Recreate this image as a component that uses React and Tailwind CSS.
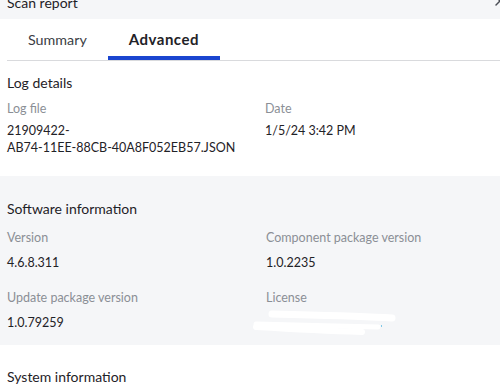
import { X } from 'lucide-react';

const font = { fontFamily: 'Lato, "Liberation Sans", sans-serif' };

function Field({ label, children }) {
  return (
    <div>
      <div className="text-[12.5px] leading-[18px] text-[#8b8f96]">{label}</div>
      <div className="mt-[7px] text-[12.5px] leading-[17px] text-[#1f2227]">{children}</div>
    </div>
  );
}

function Scribble() {
  return (
    <svg width="150" height="26" viewBox="0 0 150 26" className="-ml-[16px] mt-[3px] block">
      <path d="M22 4 C60 5, 110 6, 142 8" stroke="#ffffff" strokeWidth="7" strokeLinecap="round" fill="none" />
      <path d="M6 14 C40 15, 90 16, 128 17" stroke="#ffffff" strokeWidth="5" strokeLinecap="round" fill="none" />
      <path d="M6 17 C40 19, 80 21, 112 22" stroke="#ffffff" strokeWidth="6" strokeLinecap="round" fill="none" />
      <rect x="131" y="15" width="1" height="2" fill="#7fc8e8" />
    </svg>
  );
}

export default function App() {
  return (
    <div className="w-[500px] h-[387px] overflow-hidden bg-white" style={font}>
      {/* Header */}
      <div className="h-[19px] bg-[#f5f6f8] flex justify-between overflow-hidden px-[7px]">
        <div className="-mt-[7px] text-[14px] leading-[20px] text-[#1f2227]">Scan report</div>
        <X size={16} strokeWidth={2.2} className="-mt-[7px] -mr-[15px] text-[#4a4d55]" />
      </div>

      {/* Tabs */}
      <div className="ml-[7px] flex border-b border-[#d9dadd]">
        <button className="h-[41px] px-[21px] text-[14.3px] text-[#3a3d44]">Summary</button>
        <button className="relative h-[41px] px-[21px] text-[15px] font-bold tracking-[0.5px] text-[#1f2227]">
          Advanced
          <span className="absolute left-0 right-0 bottom-0 h-[4px] bg-[#1a45d0]" />
        </button>
      </div>

      {/* Log details */}
      <div className="px-[7px] pt-[12px] pb-[20px]">
        <div className="text-[14px] leading-[20px] text-[#1f2227]">Log details</div>
        <div className="mt-[7px] grid grid-cols-[258px_1fr]">
          <div>
            <div className="text-[12.5px] leading-[18px] text-[#8b8f96]">Log file</div>
            <div className="mt-[4px] text-[12.5px] leading-[17px] text-[#1f2227]">
              21909422-
              <br />
              AB74-11EE-88CB-40A8F052EB57.JSON
            </div>
          </div>
          <div>
            <div className="text-[12.5px] leading-[18px] text-[#8b8f96]">Date</div>
            <div className="mt-[4px] text-[12.5px] leading-[17px] text-[#1f2227]">1/5/24 3:42 PM</div>
          </div>
        </div>
      </div>

      {/* Software information */}
      <div className="bg-[#f5f6f8] px-[7px] pt-[23px] pb-[14px]">
        <div className="text-[14px] leading-[20px] text-[#1f2227]">Software information</div>
        <div className="mt-[10px] grid grid-cols-[259px_1fr] gap-y-[18px]">
          <Field label="Version">4.6.8.311</Field>
          <Field label="Component package version">1.0.2235</Field>
          <Field label="Update package version">1.0.79259</Field>
          <div className="h-[42px]">
            <div className="text-[12.5px] leading-[18px] text-[#8b8f96]">License</div>
            <Scribble />
          </div>
        </div>
      </div>

      {/* System information */}
      <div className="px-[7px] pt-[22px]">
        <div className="text-[14px] leading-[20px] text-[#1f2227]">System information</div>
      </div>
    </div>
  );
}
